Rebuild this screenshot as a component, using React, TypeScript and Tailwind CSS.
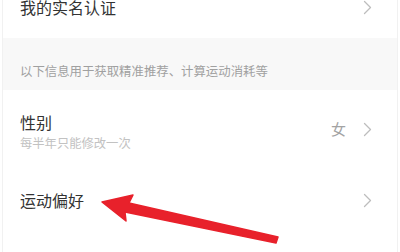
import React from "react";

const Chevron = () => (
  <svg width="9" height="15" viewBox="0 0 9 15" fill="none">
    <path d="M1.5 1.5 L7.5 7.5 L1.5 13.5" stroke="#bdbdbd" strokeWidth="1.3" strokeLinecap="round" strokeLinejoin="round" />
  </svg>
);

export default function App() {
  const font = { fontFamily: '"Noto Sans CJK SC", "Noto Sans", sans-serif' };
  return (
    <div className="relative w-[400px] h-[252px] overflow-hidden bg-white" style={font}>
      <div className="mx-[2px] h-full flex flex-col border-x border-[#f1f1f1]">
        <div className="h-[38px] flex items-start justify-between pl-[17px] pr-[25px] bg-white">
          <span className="text-[16px] leading-[14px] text-[#333]">我的实名认证</span>
          <span><Chevron /></span>
        </div>
        <div className="h-[52px] bg-[#f8f8f8] flex items-end pb-[11px] pl-[17px]">
          <span className="text-[12.4px] leading-[16px] text-[#a0a0a0]">以下信息用于获取精准推荐、计算运动消耗等</span>
        </div>
        <div className="h-[80px] flex justify-between pl-[17px] pr-[25px] bg-white">
          <div className="flex flex-col pt-[22px]">
            <span className="text-[16px] leading-[20px] text-[#333]">性别</span>
            <span className="mt-[3px] text-[12.3px] leading-[16px] text-[#c2c2c2]">每半年只能修改一次</span>
          </div>
          <div className="flex items-center gap-[17px] mb-[2px]">
            <span className="text-[15px] text-[#a3a3a3]">女</span>
            <Chevron />
          </div>
        </div>
        <div className="h-[60px] flex items-center justify-between pl-[17px] pr-[25px] bg-white">
          <span className="text-[16px] leading-[20px] text-[#333]">运动偏好</span>
          <Chevron />
        </div>
      </div>
      <svg className="absolute left-0 top-0" width="400" height="252" viewBox="0 0 400 252">
        <polygon
          points="102,202 133,195 129,203 278,237 276,243 125,212 126,221"
          fill="#e8212b"
          stroke="#e8212b"
          strokeWidth="1.5"
          strokeLinejoin="round"
        />
      </svg>
    </div>
  );
}
